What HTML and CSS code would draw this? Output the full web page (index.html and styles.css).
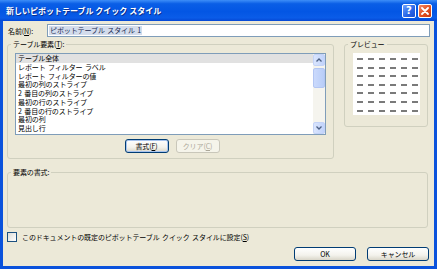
FILE: index.html
```html
<!DOCTYPE html>
<html>
<head>
  <title>新しいピボットテーブル クイック スタイル</title>
  <link rel="stylesheet" href="styles.css">
</head>
<body>
  <div class="window">
    <div class="titlebar">
      <span class="title">新しいピボットテーブル クイック スタイル</span>
      <div class="caption-buttons">
        <span class="cap-btn help">?</span>
        <span class="cap-btn close">
          <svg width="8" height="8" viewBox="0 0 8 8"><path d="M1 1 L7 7 M7 1 L1 7" stroke="#fff" stroke-width="1.8" stroke-linecap="round"/></svg>
        </span>
      </div>
    </div>

    <div class="client">
      <div class="name-row">
        <label class="name-label">名前(<u>N</u>):</label>
        <div class="textbox"><span class="selected-text">ピボットテーブル スタイル 1</span></div>
      </div>

      <div class="top-row">
        <fieldset class="group elements">
          <legend>テーブル要素(<u>T</u>):</legend>
          <div class="listbox">
            <ul class="items">
              <li class="active">テーブル全体</li>
              <li>レポート フィルター ラベル</li>
              <li>レポート フィルターの値</li>
              <li>最初の列のストライプ</li>
              <li>2 番目の列のストライプ</li>
              <li>最初の行のストライプ</li>
              <li>2 番目の行のストライプ</li>
              <li>最初の列</li>
              <li>見出し行</li>
            </ul>
            <div class="scrollbar">
              <span class="sb-btn">
                <svg width="6" height="4" viewBox="0 0 6 4"><path d="M0.5 3.5 L3 1 L5.5 3.5" fill="none" stroke="#4d6185" stroke-width="1.3"/></svg>
              </span>
              <div class="sb-track"><span class="sb-thumb"></span></div>
              <span class="sb-btn">
                <svg width="6" height="4" viewBox="0 0 6 4"><path d="M0.5 0.5 L3 3 L5.5 0.5" fill="none" stroke="#4d6185" stroke-width="1.3"/></svg>
              </span>
            </div>
          </div>
          <div class="group-buttons">
            <button class="btn focused">書式(<u>F</u>)</button>
            <button class="btn" disabled>クリア(<u>C</u>)</button>
          </div>
        </fieldset>

        <fieldset class="group preview">
          <legend>プレビュー</legend>
          <div class="preview-box" id="previewBox"></div>
        </fieldset>
      </div>

      <fieldset class="group format">
        <legend>要素の書式:</legend>
      </fieldset>

      <label class="check-row">
        <span class="checkbox"></span>
        <span>このドキュメントの既定のピボットテーブル クイック スタイルに設定(<u>S</u>)</span>
      </label>

      <div class="dialog-buttons">
        <button class="btn wide">OK</button>
        <button class="btn wide">キャンセル</button>
      </div>
    </div>
  </div>

  <script>
    // 6 x 7 placeholder dashes for the preview grid
    const box = document.getElementById('previewBox');
    for (let i = 0; i < 42; i++) {
      const dash = document.createElement('span');
      dash.className = 'dash';
      box.appendChild(dash);
    }
  </script>
</body>
</html>
```

FILE: styles.css
```css
* {
  margin: 0;
  padding: 0;
  box-sizing: border-box;
}

body {
  font-family: 'Noto Sans CJK JP', 'Noto Sans', sans-serif;
  font-size: 7px;
  letter-spacing: -0.1px;
  word-spacing: 1px;
  color: #000;
  background: #0054e3;
}

u {
  text-decoration: underline;
  text-underline-offset: 1px;
}

.window {
  width: 437px;
  height: 269px;
  display: flex;
  flex-direction: column;
  background: #0a52dc;
}

/* title bar */
.titlebar {
  height: 21px;
  flex-shrink: 0;
  display: flex;
  align-items: center;
  justify-content: space-between;
  padding: 0 5px 0 6px;
  background: linear-gradient(#3d8ef8 0%, #0a5ee6 18%, #0356e4 55%, #0a5ce8 85%, #0547d4 100%);
}

.title {
  color: white;
  font-size: 8px;
  font-weight: 700;
  letter-spacing: 0;
  word-spacing: 0;
  text-shadow: 1px 1px 0 #0a2f8c;
}

.caption-buttons {
  display: flex;
  gap: 2px;
}

.cap-btn {
  width: 14px;
  height: 14px;
  border: 1px solid white;
  border-radius: 2px;
  display: flex;
  align-items: center;
  justify-content: center;
  color: white;
  font-family: 'DejaVu Sans', sans-serif;
  font-weight: 700;
  font-size: 10px;
  letter-spacing: 0;
}

.help {
  background: linear-gradient(135deg, #6ea2ff 0%, #2663e6 60%, #1c4fd0 100%);
}

.close {
  background: linear-gradient(135deg, #f08a6a 0%, #e2501f 55%, #c83b10 100%);
}

/* client area */
.client {
  flex: 1;
  margin: 0 3px 3px;
  background: #ece9d8;
  padding: 3px 5px 0 4px;
  display: flex;
  flex-direction: column;
}

.name-row {
  display: flex;
  align-items: center;
  height: 13px;
}

.name-label {
  width: 40px;
  padding-left: 1px;
}

.textbox {
  flex: 1;
  height: 13px;
  margin-right: -1px;
  border: 1px solid #7f9db9;
  background: white;
  display: flex;
  align-items: center;
  padding-left: 1px;
}

.selected-text {
  background: #d3dcec;
  color: #1a2a50;
  line-height: 9px;
  padding: 0 1px;
}

.top-row {
  display: flex;
  align-items: flex-start;
  gap: 10px;
  margin-top: 3px;
}

/* group boxes */
.group {
  border: 1px solid #d0d0bf;
  border-radius: 3px;
  min-width: 0;
}

.group legend {
  line-height: 9px;
  padding: 0 2px;
  margin-left: -4px;
}

.elements {
  width: 327px;
  padding: 4px 7px 5px;
}

.preview {
  flex: 1;
  margin-right: 1px;
  padding: 4px 7px 11px 8px;
}

.preview legend {
  margin-left: -5px;
}

.format {
  height: 60px;
  margin-top: 9px;
  margin-right: 1px;
  padding: 0 7px;
}

/* list box */
.listbox {
  height: 82px;
  border: 1px solid #7f9db9;
  background: white;
  display: flex;
}

.items {
  flex: 1;
  list-style: none;
}

.items li {
  line-height: 8.75px;
  height: 8.75px;
  padding-left: 2px;
  white-space: nowrap;
}

.items li.active {
  background: #e1e1e1;
}

.scrollbar {
  width: 12px;
  display: flex;
  flex-direction: column;
  background: #f5f4ee;
}

.sb-btn {
  height: 12px;
  display: flex;
  align-items: center;
  justify-content: center;
  border: 1px solid #c4d3f7;
  border-radius: 2px;
  background: linear-gradient(90deg, #dae5fd, #c1d3fb);
}

.sb-track {
  flex: 1;
  padding-top: 2px;
}

.sb-thumb {
  display: block;
  height: 20px;
  border: 1px solid #b3c6f3;
  border-radius: 2px;
  background: linear-gradient(90deg, #cbdafc, #b8cdf8);
}

.group-buttons {
  display: flex;
  justify-content: center;
  gap: 7px;
  margin-top: 4px;
  padding-left: 3px;
}

/* push buttons */
.btn {
  font-family: inherit;
  font-size: 7px;
  letter-spacing: -0.1px;
  width: 44px;
  height: 14px;
  border: 1px solid #003c74;
  border-radius: 3px;
  background: linear-gradient(#ffffff 0%, #f3f2ec 60%, #d9d6c9 100%);
  color: #000;
}

.btn.focused {
  box-shadow: inset 0 0 0 1px #a8c4ee;
}

.btn:disabled {
  border-color: #c9c7ba;
  background: #f5f4ea;
  color: #aca899;
}

.btn.wide {
  width: 62px;
}

/* preview */
.preview-box {
  height: 62px;
  background: white;
  display: grid;
  grid-template-columns: repeat(6, 6px);
  grid-auto-rows: 2px;
  column-gap: 5px;
  row-gap: 6.6px;
  padding: 5px 0 0 4px;
}

.dash {
  background: #7a7a7a;
}

/* checkbox + dialog buttons */
.check-row {
  display: flex;
  align-items: center;
  gap: 5px;
  margin-top: 4px;
  height: 10px;
}

.checkbox {
  width: 10px;
  height: 10px;
  border: 1px solid #1c5180;
  background: linear-gradient(135deg, #dcdcd7, #ffffff);
}

.dialog-buttons {
  display: flex;
  justify-content: flex-end;
  gap: 11px;
  margin-top: 5px;
}
```
